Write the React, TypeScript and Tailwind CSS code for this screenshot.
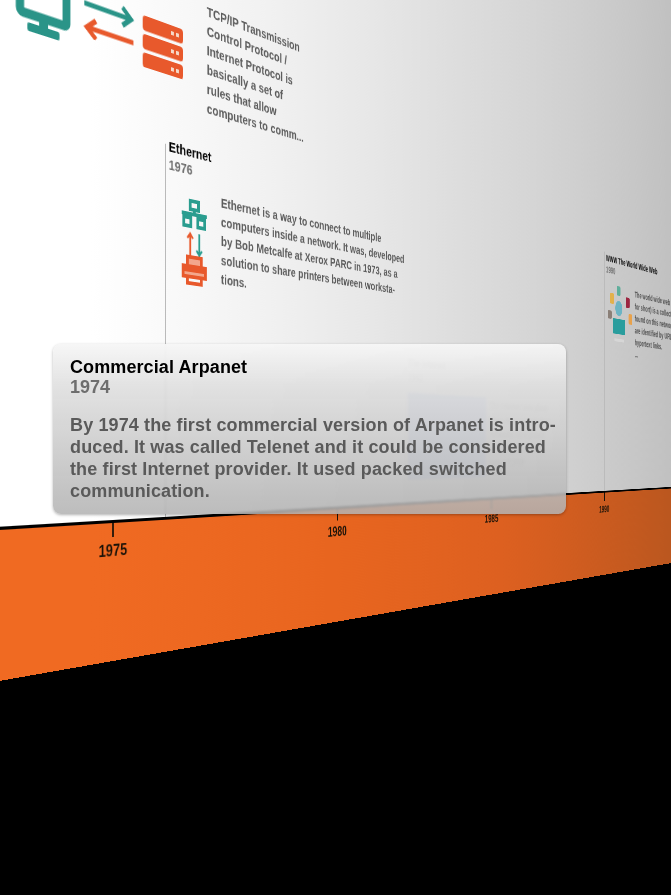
// Timeline wall seen in perspective, with a glass detail panel on top.
// The wall is drawn flat and one matrix3d folds it into the picture.
import type { ReactNode } from 'react';

// same fold as the wall's matrix3d, worked out for one spot on the wall
const FOLD = 0.000659;

function foldAt(x: number, y: number, midOffset: number) {
  const w = 1 + FOLD * (x - 113);
  const mid = 1 + FOLD * (x + midOffset - 113);
  const a = (1214 * FOLD) / (mid * mid);
  const b = (-(y - 448) * FOLD) / (mid * mid);
  const d = 1 / mid;
  return `matrix(${a},${b},0,${d},${1327 - 1214 / w},${448 + (y - 448) / w})`;
}

// Small far-away text: folded as plain 2d so that it stays readable when squeezed
function FarText({ x, y, mid = 60, className = '', children }: { x: number; y: number; mid?: number; className?: string; children: ReactNode }) {
  return (
    <div className={`absolute left-0 top-0 origin-top-left whitespace-nowrap ${className}`} style={{ transform: foldAt(x, y, mid) }}>
      {children}
    </div>
  );
}

function MonitorIcon() {
  return (
    <svg viewBox="0 0 62 92" className="mt-[4px] h-[92px] w-[62px] shrink-0" fill="none">
      <rect x="5" y="-10" width="52" height="84" rx="3" stroke="#2a9488" strokeWidth="9" />
      <rect x="26" y="76" width="10" height="8" fill="#2a9488" />
      <rect x="13" y="82" width="36" height="8" rx="2" fill="#2a9488" />
    </svg>
  );
}

function TransferArrows() {
  return (
    <svg viewBox="-2 -3 64 44" className="ml-[14px] mt-[38px] h-[44px] w-[64px] shrink-0" fill="none" strokeWidth="5">
      <path d="M0 8H58M47 -1l11 9-11 9" stroke="#2a9488" />
      <path d="M61 31H3M14 22l-11 9 11 9" stroke="#e8592c" />
    </svg>
  );
}

function ServerIcon() {
  return (
    <svg viewBox="0 0 55 53" className="ml-[11px] mt-[40px] h-[53px] w-[55px] shrink-0">
      {[0, 19, 38].map((y) => (
        <g key={y}>
          <rect x="0" y={y} width="55" height="15.5" rx="4" fill="#e8592c" />
          <rect x="38" y={y + 6} width="4" height="4" fill="#f6d9c8" />
          <rect x="45" y={y + 6} width="4" height="4" fill="#f6d9c8" />
        </g>
      ))}
    </svg>
  );
}

function NetworkPrinterIcon() {
  return (
    <svg viewBox="0 0 36 92" className="ml-[18px] mt-[22px] h-[92px] w-[36px] shrink-0" fill="none" strokeWidth="4">
      <rect x="12" y="2" width="12" height="9" stroke="#2a9d8f" />
      <path d="M18 11v5M0 16h36M8 16v4M28 16v4" stroke="#2a9d8f" />
      <rect x="3" y="20" width="10" height="9" stroke="#2a9d8f" />
      <rect x="23" y="20" width="10" height="9" stroke="#2a9d8f" />
      <path d="M12 60V37M8 42l4-5 4 5" stroke="#e8592c" strokeWidth="2.5" />
      <path d="M25 36v23M21 54l4 5 4-5" stroke="#2a9d8f" strokeWidth="2.5" />
      <path d="M8 62h20v10H8zM2 72h32v11H2z" fill="#f3a78c" stroke="#e8592c" strokeWidth="4" />
      <path d="M2 76h32M8 84v6h20v-6" stroke="#e8592c" strokeWidth="4" />
    </svg>
  );
}

function WebCluster() {
  return (
    <svg viewBox="0 0 92 98" className="ml-[6px] mt-[15px] h-[98px] w-[92px] shrink-0">
      <rect x="32" y="0" width="14" height="16" rx="3" fill="#5fae9b" />
      <rect x="8" y="14" width="14" height="18" rx="3" fill="#e2b14c" />
      <rect x="66" y="16" width="14" height="18" rx="3" fill="#9c2540" />
      <rect x="0" y="44" width="14" height="14" rx="3" fill="#8a7f77" />
      <rect x="76" y="44" width="14" height="18" rx="3" fill="#e8a24c" />
      <circle cx="40" cy="38" r="13" fill="#6cb4c4" />
      <rect x="18" y="56" width="46" height="26" rx="2" fill="#2a9d9d" />
      <rect x="34" y="82" width="14" height="7" fill="#c9c9c9" />
      <rect x="24" y="90" width="34" height="5" fill="#d6d6d6" />
    </svg>
  );
}

function YearMark({ year, near }: { year: number; near: boolean }) {
  return (
    <div className="flex w-[344px] shrink-0 flex-col items-center">
      <div className="h-[14px] w-[2px] bg-[#1a1208]" />
      {near && <div className="mt-[4px] text-[16px] font-bold leading-[20px] text-[#1a1208]">{year}</div>}
    </div>
  );
}

function Heading({ title, year, className = '' }: { title: string; year: string; className?: string }) {
  return (
    <div className={`whitespace-nowrap ${className}`}>
      <div className="text-[15px] font-bold leading-[19px] text-black">{title}</div>
      <div className="text-[15px] font-bold leading-[19px] text-[#6e6e6e]">{year}</div>
    </div>
  );
}

function Body({ lines, className = '' }: { lines: string[]; className?: string }) {
  return (
    <div className={`whitespace-nowrap text-[15px] font-bold leading-[21px] text-[#5c5c5c] ${className}`}>
      {lines.map((line) => (
        <div key={line}>{line}</div>
      ))}
    </div>
  );
}

const wwwLines = ['The world wide web', 'for short) is a collect', 'found on this network', 'are identified by URLs', 'hypertext links.', '...'];

export default function App() {
  return (
    <div className="relative h-[895px] w-[671px] overflow-hidden bg-black font-['Liberation_Sans',Arial,sans-serif]">
      <div className="absolute inset-0 blur-[0.45px]">
        <div className="absolute left-0 top-0 h-0 w-0 origin-top-left [transform:matrix3d(0.8745,0.2952,0,0.000659,0,1,0,0,0,0,1,0,14.18,-33.36,0,0.92553)]">
          {/* surface */}
          <div className="absolute left-[-200px] top-[-700px] flex w-[1900px] flex-col">
            <div className="h-[1220px] bg-[linear-gradient(90deg,#ffffff_15%,#eeeeee_31%,#dedede_47%,#cccccc_70%,#c0c0c0_85%)]" />
            <div className="h-[3px] bg-black" />
            <div className="flex h-[138px] bg-[linear-gradient(90deg,#f06a22_15%,#e8651f_34%,#dd6020_54%,#bb571f_84%)] pl-[141px]">
              {[1975, 1980, 1985, 1990].map((year) => (
                <YearMark key={year} year={year} near={year < 1985} />
              ))}
            </div>
          </div>

          {/* TCP/IP */}
          <div className="absolute left-0 top-[-36px] flex items-start">
            <MonitorIcon />
            <TransferArrows />
            <ServerIcon />
            <Body
              className="ml-[34px]"
              lines={[
                'TCP/IP Transmission',
                'Control Protocol /',
                'Internet Protocol is',
                'basically a set of',
                'rules that allow',
                'computers to comm...',
              ]}
            />
          </div>

          {/* Ethernet */}
          <div className="absolute left-[181px] top-[130px] h-[390px] border-l border-[#b4b4b4] pl-[4px]">
            <Heading title="Ethernet" year="1976" className="mt-[-8px]" />
            <div className="flex items-start">
              <NetworkPrinterIcon />
              <Body
                className="ml-[21px] mt-[8px]"
                lines={[
                  'Ethernet is a way to connect to multiple',
                  'computers inside a network. It was, developed',
                  'by Bob Metcalfe at Xerox PARC in 1973, as a',
                  'solution to share printers between worksta-',
                  'tions.',
                ]}
              />
            </div>
          </div>

          {/* The Internet, seen through the panel */}
          <div className="absolute left-[595px] top-[325px] h-[195px] border-l border-[#b4b4b4] pl-[4px]">
            <Heading title="The Internet" year="1982" className="opacity-25" />
            <div className="mt-[12px] flex items-start">
              <div className="h-[115px] w-[186px] shrink-0 bg-[#b4c0de]" />
              <Body
                className="ml-[9px] opacity-25"
                lines={['The Internet took place', 'when Arpanet and other', 'networks were joined', 'by a single protocol', 'called TCP/IP']}
              />
            </div>
          </div>

          {/* WWW */}
          <div className="absolute left-[1145px] top-[118px] h-[402px] border-l border-[#b6b6b6] pl-[5px]">
            <div className="flex items-start pt-[38px]">
              <WebCluster />
            </div>
          </div>
        </div>

        <FarText x={1151} y={118} mid={95} className="text-[15px] font-bold leading-[19px] text-black">
          WWW The World Wide Web
        </FarText>
        <FarText x={1151} y={137} mid={15} className="text-[15px] font-bold leading-[19px] text-[#6e6e6e]">
          1990
        </FarText>
        {wwwLines.map((line, i) => (
          <FarText key={line} x={1257} y={168 + i * 21} className="text-[15px] font-bold leading-[21px] text-[#4c4c4c]">
            {line}
          </FarText>
        ))}
        <FarText x={783} y={541} mid={18} className="text-[16px] font-bold leading-[20px] text-[#1a1208]">
          1985
        </FarText>
        <FarText x={1127} y={541} mid={18} className="text-[16px] font-bold leading-[20px] text-[#1a1208]">
          1990
        </FarText>
      </div>

      {/* detail panel */}
      <div className="absolute left-[53px] top-[344px] h-[170px] w-[513px] rounded-[8px] bg-[linear-gradient(180deg,rgba(246,246,246,0.94),rgba(222,222,222,0.88)_25%,rgba(178,178,178,0.86))] px-[17px] pt-[13px] shadow-[0_1px_3px_rgba(0,0,0,0.3)] backdrop-blur-[1px]">
        <div className="text-[18px] font-bold leading-[20px] tracking-[0.1px] text-black">Commercial Arpanet</div>
        <div className="text-[18px] font-bold leading-[20px] text-[#6e6e6e]">1974</div>
        <div className="mt-[17px] whitespace-nowrap text-[18px] font-bold leading-[22px] tracking-[0.13px] text-[#5a5a5a]">
          <div>By 1974 the first commercial version of Arpanet is intro-</div>
          <div>duced. It was called Telenet and it could be considered</div>
          <div>the first Internet provider. It used packed switched</div>
          <div>communication.</div>
        </div>
      </div>
    </div>
  );
}
